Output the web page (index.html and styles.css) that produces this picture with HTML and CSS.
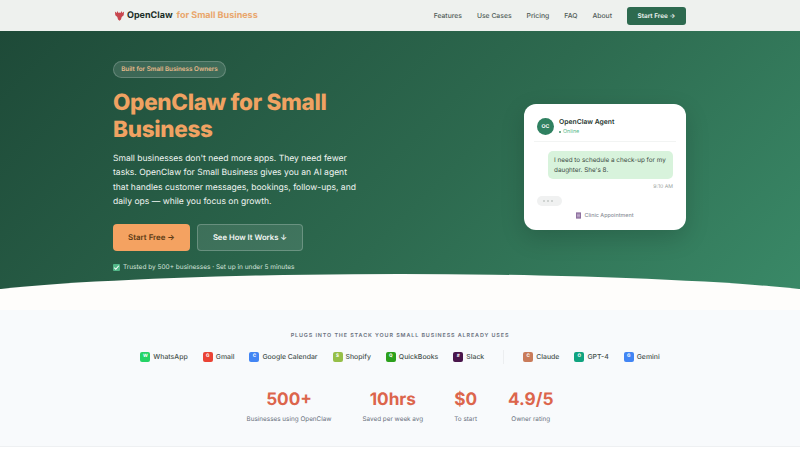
FILE: index.html
```html
<!DOCTYPE html>
<html lang="en">
<head>
<meta charset="utf-8">
<title>OpenClaw for Small Business</title>
<link rel="stylesheet" href="styles.css">
</head>
<body>
<header class="nav">
  <div class="wrap nav-row">
    <a class="brand">
      <svg class="claw" viewBox="0 0 12 12" width="11" height="11"><path d="M1 1.5 3 3.2 3.6 1 5 3.4 6 2.6 7 3.4 8.4 1 9 3.2 11 1.5 10.6 5.6 8.4 7.6 7.6 10.4 6 11.6 4.4 10.4 3.6 7.6 1.4 5.6Z" fill="#c8474f"/></svg>
      <span class="brand-name">OpenClaw</span>
      <span class="brand-sub">for Small Business</span>
    </a>
    <nav class="links">
      <a>Features</a><a>Use Cases</a><a>Pricing</a><a>FAQ</a><a>About</a>
      <a class="nav-cta">Start Free →</a>
    </nav>
  </div>
</header>

<section class="hero">
  <div class="hero-row">
    <div class="hero-copy">
      <span class="pill">Built for Small Business Owners</span>
      <h1>OpenClaw for Small Business</h1>
      <p class="lede">Small businesses don't need more apps. They need fewer tasks. OpenClaw for Small Business gives you an AI agent that handles customer messages, bookings, follow-ups, and daily ops — while you focus on growth.</p>
      <div class="actions">
        <a class="btn btn-primary">Start Free →</a>
        <a class="btn btn-ghost">See How It Works ↓</a>
      </div>
      <p class="trust"><span class="check"><svg viewBox="0 0 8 8" width="7" height="7"><path d="M1.5 4.2 3.2 6 6.6 2" fill="none" stroke="#fff" stroke-width="1.2"/></svg></span>Trusted by 500+ businesses · Set up in under 5 minutes</p>
    </div>
    <aside class="chat">
      <div class="chat-head">
        <span class="avatar">OC</span>
        <div>
          <div class="agent">OpenClaw Agent</div>
          <div class="status"><span class="dot"></span>Online</div>
        </div>
      </div>
      <div class="bubble">I need to schedule a check-up for my daughter. She's 8.</div>
      <div class="time">9:10 AM</div>
      <div class="typing"><i></i><i></i><i></i></div>
      <div class="tag"><svg viewBox="0 0 8 10" width="5" height="7"><path d="M0 0H8V10H0Z" fill="#8d6f9e"/><path d="M1.5 3H6.5M1.5 5H6.5M1.5 7H6.5" stroke="#e9dff0" stroke-width=".8"/></svg>Clinic Appointment</div>
    </aside>
  </div>
</section>

<section class="stack">
  <div class="eyebrow">PLUGS INTO THE STACK YOUR SMALL BUSINESS ALREADY USES</div>
  <div class="logos">
    <span class="logo"><b class="c-wa">W</b>WhatsApp</span>
    <span class="logo"><b class="c-gm">G</b>Gmail</span>
    <span class="logo"><b class="c-gc">C</b>Google Calendar</span>
    <span class="logo"><b class="c-sh">S</b>Shopify</span>
    <span class="logo"><b class="c-qb">Q</b>QuickBooks</span>
    <span class="logo"><b class="c-sl">#</b>Slack</span>
    <span class="sep"></span>
    <span class="logo"><b class="c-cl">C</b>Claude</span>
    <span class="logo"><b class="c-gp">O</b>GPT-4</span>
    <span class="logo"><b class="c-ge">G</b>Gemini</span>
  </div>
  <div class="stats">
    <div class="stat"><strong>500+</strong><span>Businesses using OpenClaw</span></div>
    <div class="stat"><strong>10hrs</strong><span>Saved per week avg</span></div>
    <div class="stat"><strong>$0</strong><span>To start</span></div>
    <div class="stat"><strong>4.9/5</strong><span>Owner rating</span></div>
  </div>
</section>
</body>
</html>
```

FILE: styles.css
```css
* { box-sizing: border-box; }
html, body { margin: 0; height: 450px; overflow: hidden; }
body { font-family: Inter, "Liberation Sans", sans-serif; background: #fff; color: #1a2e25; text-rendering: geometricPrecision; }
a { text-decoration: none; color: inherit; }
.wrap { width: 572px; margin: 0 auto; }

.nav { height: 31px; background: #eef1ee; }
.nav-row { height: 31px; display: flex; align-items: center; justify-content: space-between; }
.brand { display: flex; align-items: center; font-weight: 700; font-size: 9px; }
.claw { margin-right: 2px; }
.brand-name { color: #1c2f28; }
.brand-sub { color: #e9a66c; margin-left: 4px; }
.links { display: flex; align-items: center; gap: 15px; font-size: 6.8px; font-weight: 500; color: #4f5b56; }
.nav-cta { background: #2d6a4f; color: #f3f7f4; font-size: 6.4px; font-weight: 600; width: 59px; text-align: center; height: 18px; line-height: 18px; border-radius: 3px; }

.hero { position: relative; height: 279px; background: linear-gradient(135deg, #1e4a38 0%, #2d6a4f 55%, #3a8a68 100%); overflow: hidden; }
.hero::after { content: ""; position: absolute; left: -10%; width: 120%; top: 243px; height: 67px; background: #fefdfb; border-radius: 50%; }
.hero-row { display: flex; justify-content: space-between; align-items: flex-start; position: relative; z-index: 1; margin: 0 114px 0 113px; }
.hero-copy { width: 246px; padding-top: 30px; }
.pill { display: block; width: 113px; height: 17px; line-height: 15px; text-align: center; font-size: 6.3px; font-weight: 600; color: #e6b98b; background: rgba(255,255,255,.12); border: 1px solid rgba(255,255,255,.2); border-radius: 9px; }
h1 { margin: 12px 0 0; font-size: 22.5px; line-height: 26.5px; font-weight: 800; letter-spacing: -.3px; color: #f0a262; }
.lede { margin: 8.5px 0 0; font-size: 8.55px; line-height: 14.5px; color: #f0f5f2; }
.actions { display: flex; gap: 7px; margin-top: 14px; }
.btn { display: block; height: 27px; line-height: 27px; border-radius: 4px; font-size: 7.9px; font-weight: 600; text-align: center; }
.btn-primary { width: 77px; background: #f4a261; color: #5c3a14; }
.btn-ghost { width: 106px; line-height: 25px; font-size: 7.7px; background: rgba(255,255,255,.1); border: 1px solid rgba(255,255,255,.22); color: #f4f8f5; }
.trust { display: flex; align-items: center; gap: 3px; margin: 12.5px 0 0; font-size: 6.5px; line-height: 9px; color: #d3e2da; }
.check { display: inline-flex; width: 7px; height: 7px; background: #52b788; align-items: center; justify-content: center; border-radius: 1px; }

.chat { width: 162px; height: 126px; margin-top: 73px; background: #fff; border-radius: 12px; padding: 13px 13px 0; box-shadow: 0 8px 24px rgba(0,0,0,.16); }
.chat-head { display: flex; align-items: center; gap: 5px; padding-bottom: 5px; margin: 0 -3px; border-bottom: 1px solid #f2f4f3; padding-left: 3px; }
.avatar { width: 17px; height: 17px; border-radius: 50%; background: #2f8060; color: #fff; font-size: 5.2px; font-weight: 700; display: flex; align-items: center; justify-content: center; }
.agent { font-size: 6.8px; font-weight: 600; color: #26362f; line-height: 10px; }
.status { display: flex; align-items: center; gap: 2px; font-size: 5.4px; color: #52b788; line-height: 8px; margin-top: 1px; }
.dot { width: 2px; height: 2px; border-radius: 50%; background: #40916c; }
.bubble { margin: 9px 0 0 11px; padding: 4px 6px; height: 28px; background: #d8f3dc; border-radius: 5px; font-size: 6.35px; line-height: 10px; color: #3c4b44; }
.time { text-align: right; font-size: 5.2px; line-height: 8px; margin-top: 4px; color: #9aa3a0; }
.typing { display: flex; gap: 2px; width: 25px; height: 10px; margin-top: 5px; padding-left: 6px; align-items: center; background: #f0f1f1; border-radius: 5px; }
.typing i { width: 2px; height: 2px; border-radius: 50%; background: #c4c9c6; }
.tag { display: flex; align-items: center; justify-content: center; gap: 3px; margin-top: 6px; font-size: 5.4px; font-weight: 500; color: #8b8f98; }

.stack { height: 137px; padding-top: 22px; background: #f8fafc; border-bottom: 1px solid #eef0f2; }
.eyebrow { text-align: center; font-size: 5.4px; line-height: 8px; font-weight: 600; letter-spacing: .9px; color: #6b7280; }
.logos { display: flex; justify-content: center; align-items: center; gap: 15px; margin-top: 10.5px; height: 12px; font-size: 6.9px; font-weight: 500; color: #46514c; }
.logo { display: flex; align-items: center; gap: 3px; }
.logo b { width: 10px; height: 10px; border-radius: 2px; color: #fff; font-size: 4.6px; font-weight: 700; display: flex; align-items: center; justify-content: center; }
.sep { width: 1px; height: 14px; background: #eceef0; margin: 0 4px; }
.c-wa { background: #25d366; } .c-gm { background: #ea4335; } .c-gc { background: #4285f4; }
.c-sh { background: #96bf48; } .c-qb { background: #2ca01c; } .c-sl { background: #4a154b; }
.c-cl { background: #c97b5a; } .c-gp { background: #10a37f; } .c-ge { background: #4285f4; }
.stats { display: flex; justify-content: center; gap: 31px; margin-top: 26.5px; }
.stat { display: flex; flex-direction: column; align-items: center; }
.stat strong { font-size: 17.2px; line-height: 22px; font-weight: 700; color: #dc654c; }
.stat span { font-size: 6.35px; line-height: 9px; margin-top: 4px; color: #6b7280; }
```
